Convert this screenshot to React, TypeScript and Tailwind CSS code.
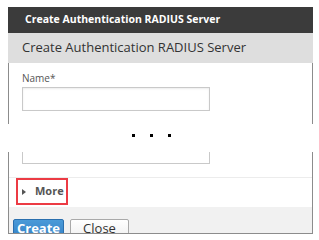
import React from 'react';

const font = { fontFamily: '"Open Sans", "DejaVu Sans", sans-serif' };

const App: React.FC = () => {
    return (
        <div className="w-[319px] h-[240px] bg-white overflow-hidden pt-[7px] pl-[8px]" style={font}>
            <div className="w-[305px] flex flex-col">
                {/* dialog title bar */}
                <div className="h-[26px] bg-[#3b3b3b] flex items-center pl-[17px] text-[10.5px] font-bold text-white">
                    Create Authentication RADIUS Server
                </div>
                <div className="h-[30px] bg-[#dedede] flex items-center pl-[14px] text-[13px] text-[#333333]">
                    Create Authentication RADIUS Server
                </div>

                {/* first part of the form */}
                <div className="h-[61px] border-x border-[#8c8c8c] pl-[13px] pt-[9px]">
                    <div className="text-[10px] leading-[13px] text-[#555555]">Name*</div>
                    <div className="mt-[2px] w-[188px] h-[24px] border border-[#c9c9c9] shadow-[inset_0_1px_2px_rgba(0,0,0,0.08)]"></div>
                </div>

                {/* elided section */}
                <div className="h-[28px] flex gap-[15px] pl-[124px] pt-[10px]">
                    <span className="w-[3px] h-[3px] bg-black"></span>
                    <span className="w-[3px] h-[3px] bg-black"></span>
                    <span className="w-[3px] h-[3px] bg-black"></span>
                </div>

                {/* rest of the form */}
                <div className="border-x border-[#8c8c8c]">
                    <div className="pl-[13px] pb-[13px]">
                        <div className="w-[188px] h-[12px] border-x border-b border-[#c9c9c9]"></div>
                    </div>
                    <div className="h-px bg-[#ececec]"></div>
                    <div className="h-[29px] pl-[7px]">
                        <div className="w-[52px] h-[27px] border-2 border-[#ec3b44] flex items-center pl-[4px] gap-[9px]">
                            <span className="w-0 h-0 border-y-[3px] border-y-transparent border-l-[4px] border-l-[#555555]"></span>
                            <span className="text-[11px] font-bold text-[#555555]">More</span>
                        </div>
                    </div>
                </div>

                {/* footer with buttons, cut off like the screenshot */}
                <div className="h-[27px] bg-[#f1f1f1] border-x border-b border-[#8c8c8c] overflow-hidden flex items-start gap-[6px] pt-[12px] pl-[4px]">
                    <button className="shrink-0 w-[51px] h-[24px] rounded-[2px] bg-gradient-to-b from-[#4a9ad8] to-[#2f7cc2] border border-[#2a6fae] text-white text-[13px] leading-[16px] font-bold flex items-start justify-center pt-0">
                        Create
                    </button>
                    <button className="shrink-0 w-[59px] h-[24px] rounded-[2px] bg-gradient-to-b from-white to-[#ececec] border border-[#a9a9a9] text-[#333333] text-[13px] leading-[16px] flex items-start justify-center pt-0">
                        Close
                    </button>
                </div>
            </div>
        </div>
    );
};

export default App;
